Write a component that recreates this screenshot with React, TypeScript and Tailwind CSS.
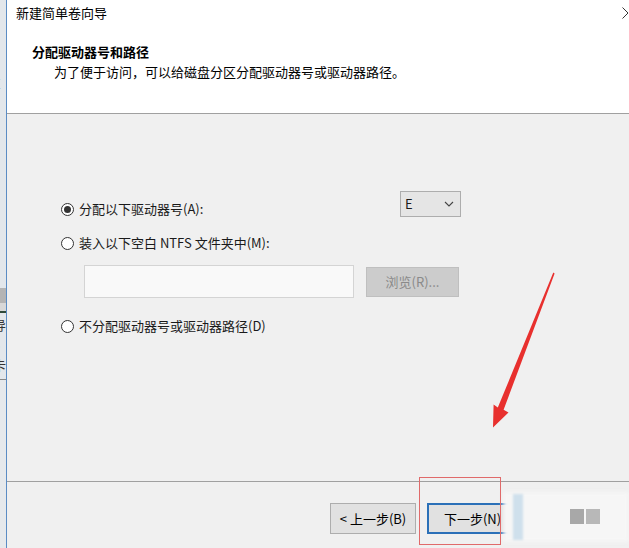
import React from "react";

const font = { fontFamily: '"Noto Sans CJK SC", "Noto Sans", sans-serif' };

function Radio({ checked }: { checked?: boolean }) {
  return (
    <span className="w-[13px] h-[13px] rounded-full border border-[#333] bg-white flex items-center justify-center shrink-0">
      {checked && <span className="w-[7px] h-[7px] rounded-full bg-[#333]" />}
    </span>
  );
}

export default function App() {
  return (
    <div
      className="relative w-[629px] h-[548px] overflow-hidden flex bg-[#f0f0f0] text-[13px] text-[#1a1a1a]"
      style={font}
    >
      {/* background window fragment on the left */}
      <div className="w-[6px] shrink-0 bg-[#e3e7eb] flex flex-col overflow-hidden text-[13px] leading-[18px] text-[#555]">
        <div className="h-[288px] flex flex-col pt-[3px] -ml-[5px]">
          <span>(</span>
          <span>(</span>
          <span>(</span>
          <span>(</span>
          <span className="-ml-[2px]">E</span>
          <span className="-ml-[2px]">\</span>
        </div>
        <div className="h-[15px] bg-[#b4b4b4]" />
        <div className="h-[8px] bg-[#d8d8d8]" />
        <div className="h-[2px] bg-[#2f4a3a]" />
        <div className="flex flex-col -ml-[7px] text-[#333] leading-[20px] pt-[2px]">
          <span>导</span>
          <span>3</span>
          <span>卡</span>
        </div>
        <div className="mt-[4px] h-[1px] bg-[#888]" />
        <div className="flex-1 bg-[#e6e9ec]" />
      </div>
      <div className="w-[1px] shrink-0 bg-[#5b8cc4]" />

      {/* dialog */}
      <div className="flex-1 flex flex-col min-w-0">
        {/* header */}
        <div className="h-[114px] shrink-0 bg-white border-b border-[#a0a0a0] flex flex-col pl-[9px]">
          <div className="h-[18px] mt-[4px] leading-[18px] text-black">新建简单卷向导</div>
          <div className="h-[18px] mt-[21px] ml-[16px] leading-[18px] font-bold text-black">
            分配驱动器号和路径
          </div>
          <div className="h-[18px] mt-[2px] ml-[38px] leading-[18px] text-black">
            为了便于访问，可以给磁盘分区分配驱动器号或驱动器路径。
          </div>
        </div>

        {/* body */}
        <div className="flex-1 flex flex-col pl-[54px] pt-[77px]">
          <div className="flex items-start h-[26px]">
            <div className="w-[339px] flex items-center gap-[5px] mt-[9px] h-[18px] leading-[18px]">
              <Radio checked />
              <span>分配以下驱动器号(A):</span>
            </div>
            <div className="w-[61px] h-[26px] bg-[#e5e5e5] border border-[#adadad] flex items-center justify-between pl-[4px] pr-[6px]">
              <span className="leading-[18px]">E</span>
              <svg width="10" height="6" viewBox="0 0 10 6">
                <path d="M1 1 L5 5 L9 1" fill="none" stroke="#444" strokeWidth="1.1" />
              </svg>
            </div>
          </div>
          <div className="flex items-center gap-[5px] h-[18px] mt-[17px] leading-[18px]">
            <Radio />
            <span>装入以下空白 NTFS 文件夹中(M):</span>
          </div>
          <div className="flex items-center mt-[13px] ml-[23px]">
            <div className="w-[270px] h-[33px] bg-[#f9f9f9] border border-[#d4d4d4]" />
            <div className="ml-[12px] w-[93px] h-[30px] bg-[#cccccc] border border-[#bfbfbf] flex items-center justify-center text-[#8a8a8a]">
              浏览(R)...
            </div>
          </div>
          <div className="flex items-center gap-[5px] h-[18px] mt-[19px] leading-[18px]">
            <Radio />
            <span>不分配驱动器号或驱动器路径(D)</span>
          </div>
          <div className="flex-1" />
        </div>

        {/* footer */}
        <div className="h-[67px] shrink-0 border-t border-[#a0a0a0] flex items-start pt-[21px] pl-[323px] gap-[11px]">
          <div className="w-[86px] h-[31px] bg-[#e1e1e1] border border-[#adadad] flex items-center justify-center text-black">
            &lt; 上一步(B)
          </div>
          <div className="w-[91px] h-[31px] bg-[#e1e1e1] border-2 border-[#2b70b8] flex items-center justify-center text-black">
            下一步(N)
          </div>
        </div>
      </div>

      {/* close button fragment */}
      <svg className="absolute left-[621px] top-[6px]" width="8" height="14" viewBox="0 0 8 14">
        <path d="M1.5 1.5 L7 7 L1.5 12.5" fill="none" stroke="#333" strokeWidth="1" />
      </svg>

      {/* watermark blur */}
      <div className="absolute left-[503px] top-[492px] w-[126px] h-[50px] bg-[#f6f6f6] blur-[2px]" />
      <div className="absolute left-[513px] top-[494px] w-[10px] h-[46px] bg-[#cfe0ec] blur-[1px]" />
      <div className="absolute left-[570px] top-[509px] w-[30px] h-[15px] flex gap-[2px]">
        <div className="flex-1 bg-[#a8a8a8]" />
        <div className="flex-1 bg-[#b8b8b8]" />
      </div>

      {/* red highlight box */}
      <div className="absolute left-[419px] top-[477px] w-[82px] h-[68px] border-[1.5px] border-[#e06a6a]" />

      {/* red arrow */}
      <svg className="absolute left-0 top-0 pointer-events-none" width="629" height="548" viewBox="0 0 629 548">
        <polygon
          points="553.3,272.6 554.6,273.4 503.6,409.8 508.5,412.5 493,427.5 493.6,404.6 497.8,407.6"
          fill="#e8302e"
        />
      </svg>
    </div>
  );
}
